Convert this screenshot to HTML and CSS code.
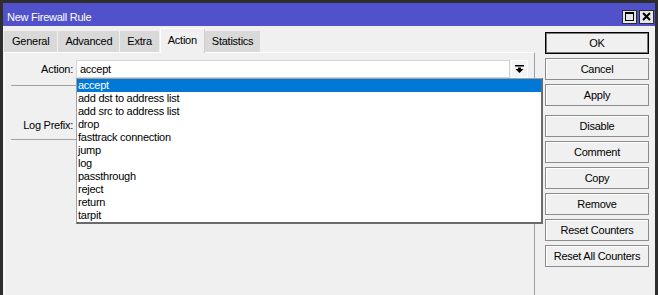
FILE: index.html
```html
<!DOCTYPE html>
<html lang="en">
<head>
    <meta charset="UTF-8">
    <title>New Firewall Rule</title>
    <link rel="stylesheet" href="styles.css">
</head>
<body>
    <div class="window">
        <div class="titlebar">
            <span class="title">New Firewall Rule</span>
            <div class="title-buttons">
                <span class="tbtn">
                    <svg width="9" height="9" viewBox="0 0 9 9"><rect x="0.5" y="0.5" width="8" height="8" fill="none" stroke="#000"/><rect x="0" y="0" width="9" height="2" fill="#000"/></svg>
                </span>
                <span class="tbtn">
                    <svg width="9" height="9" viewBox="0 0 9 9"><path d="M1 1 L8 8 M8 1 L1 8" stroke="#000" stroke-width="2"/></svg>
                </span>
            </div>
        </div>

        <div class="main">
            <div class="left">
                <div class="tabs">
                    <div class="tab">General</div>
                    <div class="tab">Advanced</div>
                    <div class="tab">Extra</div>
                    <div class="tab active">Action</div>
                    <div class="tab">Statistics</div>
                </div>
                <div class="panel">
                    <div class="row">
                        <label>Action:</label>
                        <div class="combo">
                            <div class="combo-text">accept</div>
                            <div class="combo-btn">
                                <svg width="9" height="8" viewBox="0 0 9 8"><rect x="0" y="0" width="9" height="1.5" fill="#000"/><polygon points="3,2.5 6,2.5 6,4 8.5,4 4.5,8 0.5,4 3,4" fill="#000"/></svg>
                            </div>
                            <ul class="list">
                                <li class="selected">accept</li>
                                <li>add dst to address list</li>
                                <li>add src to address list</li>
                                <li>drop</li>
                                <li>fasttrack connection</li>
                                <li>jump</li>
                                <li>log</li>
                                <li>passthrough</li>
                                <li>reject</li>
                                <li>return</li>
                                <li>tarpit</li>
                            </ul>
                        </div>
                    </div>
                    <div class="sep"></div>
                    <div class="row"></div>
                    <div class="row">
                        <label>Log Prefix:</label>
                        <div class="field"></div>
                    </div>
                    <div class="sep sep-low"></div>
                </div>
            </div>

            <div class="buttons">
                <div class="btn default">OK</div>
                <div class="btn">Cancel</div>
                <div class="btn">Apply</div>
                <div class="btn group">Disable</div>
                <div class="btn">Comment</div>
                <div class="btn">Copy</div>
                <div class="btn">Remove</div>
                <div class="btn">Reset Counters</div>
                <div class="btn">Reset All Counters</div>
            </div>
        </div>
    </div>
</body>
</html>
```

FILE: styles.css
```css
body {
    margin: 0;
    font-family: "Liberation Sans", Arial, sans-serif;
    font-size: 11px;
    letter-spacing: -0.25px;
    color: #000;
}
.window {
    width: 658px;
    height: 295px;
    box-sizing: border-box;
    background: #f0f0f0;
    border: 3px solid #2e2e2e;
    border-bottom: none;
    overflow: hidden;
}
.titlebar {
    height: 23px;
    box-sizing: border-box;
    padding: 4px 1px 0 4px;
    background: #5151cc;
    color: #fff;
    display: flex;
    align-items: center;
    justify-content: space-between;
}
.title-buttons {
    display: flex;
    gap: 2px;
}
.tbtn {
    width: 13px;
    height: 12px;
    border: 1px solid #2a2a2a;
    background: #e6e6e6;
    display: flex;
    align-items: center;
    justify-content: center;
}
.main {
    display: flex;
    height: 269px;
}
.left {
    width: 531px;
    margin-left: 1px;
    display: flex;
    flex-direction: column;
}
.tabs {
    display: flex;
    align-items: flex-end;
    gap: 1px;
    height: 26px;
    padding-top: 2px;
    box-sizing: border-box;
}
.tab {
    height: 21px;
    line-height: 21px;
    padding: 0 7px;
    background: #d9d9d9;
}
.tab:first-child {
    padding: 0 8px;
}
.tab.active {
    height: 25px;
    line-height: 23px;
    padding: 0 7px;
    margin: 0 -1px 0 0;
    background: #f0f0f0;
    border: 1px solid #fff;
    border-right-color: #cfcfcf;
    border-bottom: none;
    box-sizing: border-box;
    position: relative;
    top: 1px;
}
.panel {
    flex: 1;
    border-top: 1px solid #fff;
    border-left: 1px solid #fff;
    border-right: 1px solid #a0a0a0;
}
.row {
    display: grid;
    grid-template-columns: 68px 452px;
    column-gap: 3px;
    height: 18px;
    margin-top: 6px;
    align-items: center;
}
.row:first-child {
    margin-top: 7px;
}
.row label {
    text-align: right;
}
.combo {
    display: flex;
    height: 18px;
    position: relative;
}
.combo-text {
    flex: 1;
    background: #fff;
    border: 1px solid #d4d4d4;
    padding-left: 3px;
    line-height: 16px;
    margin-right: 1px;
}
.combo-btn {
    width: 17px;
    display: flex;
    align-items: center;
    justify-content: center;
    background: #f4f4f4;
    border: 1px solid #fff;
    box-sizing: border-box;
}
.field {
    height: 18px;
    background: #fff;
    border: 1px solid #d4d4d4;
    box-sizing: border-box;
}
.sep {
    height: 1px;
    background: #a0a0a0;
    margin: 7px 6px 0 6px;
}
.sep-low {
    margin-top: 5px;
}
.list {
    position: absolute;
    top: 18px;
    left: 0;
    width: 467px;
    box-sizing: border-box;
    margin: 0;
    padding: 0;
    list-style: none;
    background: #fff;
    border: 1px solid #a0a0a0;
    border-right: 2px solid #6a6a6a;
    border-bottom: 2px solid #6a6a6a;
    z-index: 2;
}
.list li {
    height: 13px;
    line-height: 13px;
    padding-left: 1px;
}
.list li.selected {
    background: #0078d7;
    color: #fff;
}
.buttons {
    margin-left: 10px;
    padding-top: 6px;
    width: 104px;
    display: flex;
    flex-direction: column;
    gap: 4px;
}
.btn {
    height: 22px;
    box-sizing: border-box;
    line-height: 20px;
    text-align: center;
    background: #f0f0f0;
    border: 1px solid #8c8c8c;
    box-shadow: inset 1px 1px 0 #fff;
}
.btn.default {
    border-color: #000;
    box-shadow: inset 0 0 0 1px #7a7a7a;
}
.btn.group {
    margin-top: 5px;
}
```
